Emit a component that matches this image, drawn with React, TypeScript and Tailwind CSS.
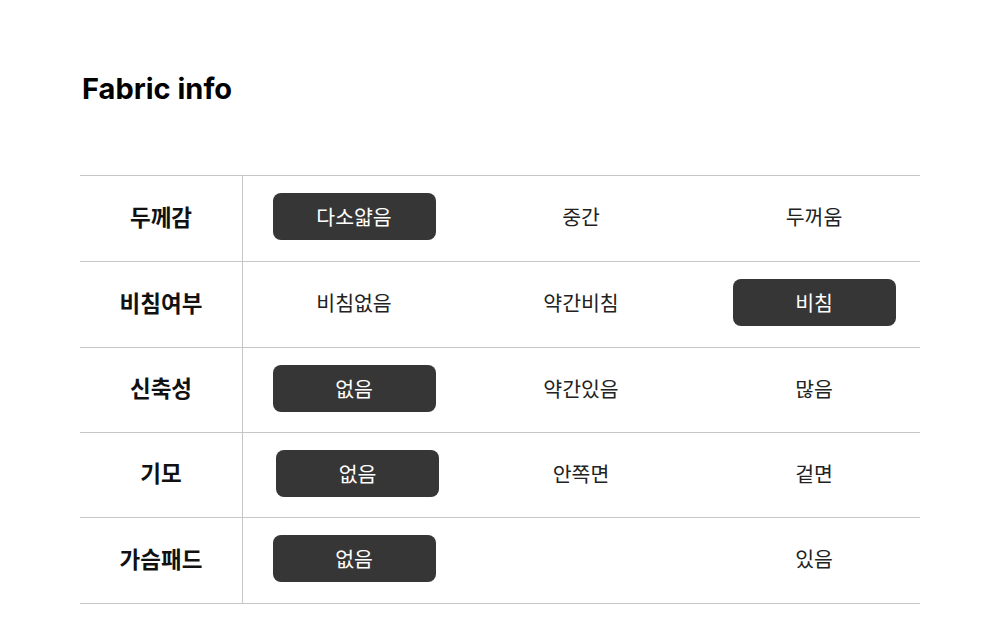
const rows = [
  { label: "두께감", options: ["다소얇음", "중간", "두꺼움"], active: 0, h: "h-[86px]" },
  { label: "비침여부", options: ["비침없음", "약간비침", "비침"], active: 2, h: "h-[86px]" },
  { label: "신축성", options: ["없음", "약간있음", "많음"], active: 0, h: "h-[85px]" },
  { label: "기모", options: ["없음", "안쪽면", "겉면"], active: 0, h: "h-[85px]", nudge: true },
  { label: "가슴패드", options: ["없음", "", "있음"], active: 0, h: "h-[86px]" },
];

const colWidths = ["w-[222px]", "w-[232px]", "w-[223px] pl-[11px]"];

export default function App() {
  return (
    <div className="w-[1000px] h-[631px] bg-white font-['Inter','Noto_Sans_CJK_KR',sans-serif]">
      <div className="pl-[82px] pt-[70px]">
        <h1 className="text-[29px] leading-[38px] font-bold text-black">Fabric info</h1>
      </div>
      <div className="ml-[80px] mt-[67px] w-[840px] border-t border-[#c6c6c6]">
        {rows.map((row) => (
          <div key={row.label} className={`flex ${row.h} border-b border-[#c6c6c6]`}>
            <div className="w-[163px] border-r border-[#c6c6c6] flex items-center justify-center pb-[4px] text-[22.5px] font-semibold text-[#111] font-['Noto_Sans_CJK_KR',sans-serif]">
              {row.label}
            </div>
            {row.options.map((opt, i) => (
              <div key={i} className={`${colWidths[i]} flex items-center justify-center pb-[4px]`}>
                {opt === "" ? null : i === row.active ? (
                  <div
                    className={`w-[163px] h-[47px] rounded-[8px] bg-[#363636] text-white flex items-center justify-center text-[20.5px] font-['Noto_Sans_CJK_KR',sans-serif] ${
                      row.nudge ? "ml-[7px]" : ""
                    }`}
                  >
                    {opt}
                  </div>
                ) : (
                  <span className="text-[20.5px] text-[#222] font-['Noto_Sans_CJK_KR',sans-serif]">{opt}</span>
                )}
              </div>
            ))}
          </div>
        ))}
      </div>
    </div>
  );
}
